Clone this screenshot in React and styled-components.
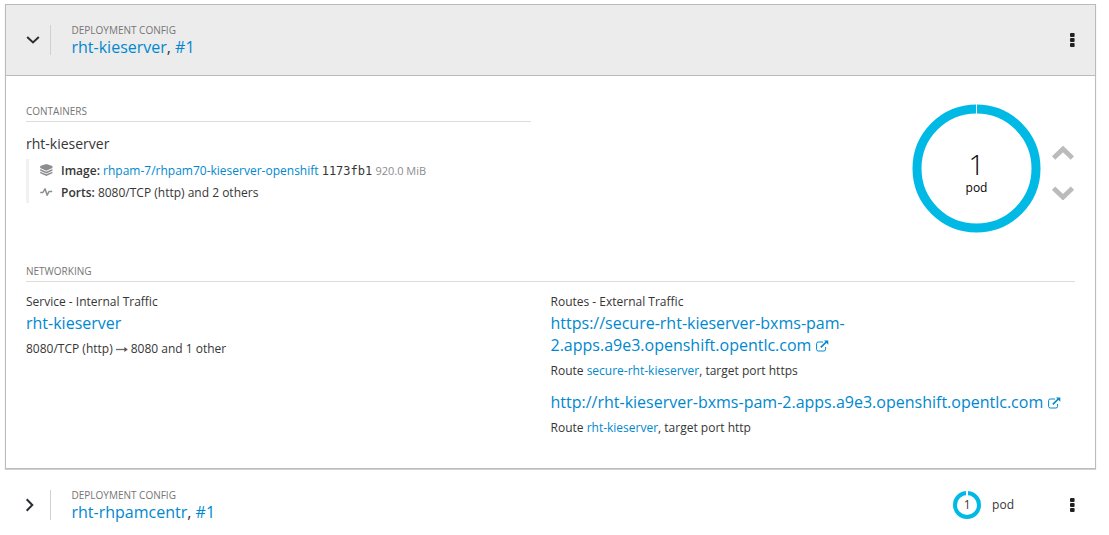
import React from "react";
import styled, { createGlobalStyle } from "styled-components";

const GlobalStyle = createGlobalStyle`
  * { box-sizing: border-box; }
  body {
    margin: 0;
    background: #fff;
    color: #363636;
    font: 12px/20px "Open Sans", "Noto Sans", sans-serif;
  }
`;

const Page = styled.main`
  width: 1091px;
  margin: 4px 0 0 5px;
`;

const Card = styled.section`
  height: 465px;
  margin-bottom: 1px;
  border: 1px solid #bbb;
  box-shadow: 0 1px 1px rgba(0, 0, 0, 0.18);
`;

const Header = styled.header`
  display: flex;
  align-items: center;
  height: ${(p) => (p.$open ? 71 : 70)}px;
  padding-left: ${(p) => (p.$open ? 13 : 14)}px;
  padding-right: ${(p) => (p.$open ? 18 : 19)}px;
  background: ${(p) => (p.$open ? "#ececec" : "#fff")};
  border-bottom: ${(p) => (p.$open ? "1px solid #bbb" : "none")};
`;

const Toggle = styled.div`
  display: flex;
  align-items: center;
  width: 32px;
  height: 30px;
  border-right: 1px solid #d1d1d1;
  padding-left: ${(p) => (p.$open ? 7 : 6)}px;
`;

const Titles = styled.div`
  flex: 1;
  padding-left: 20.5px;
`;

const Eyebrow = styled.div`
  color: #757575;
  font-size: 10px;
  line-height: 14px;
  text-transform: uppercase;
`;

const Title = styled.h2`
  margin: 0;
  font-size: 16px;
  font-weight: 400;
  line-height: 20px;
`;

const Link = styled.a`
  color: #0088ce;
  text-decoration: none;
`;

const Kebab = styled.div`
  display: flex;
  width: 10px;
  justify-content: center;
`;

const Body = styled.div`
  padding: 28px 20px 0;
`;

const TopRow = styled.div`
  display: flex;
  justify-content: space-between;
  height: 160px;
`;

const Containers = styled.div`
  width: 505px;
`;

const SectionTitle = styled.h3`
  margin: 0;
  height: 18px;
  border-bottom: 1px solid #dcdcdc;
  color: #757575;
  font-size: 10px;
  font-weight: 400;
  line-height: 14px;
  text-transform: uppercase;
`;

const ContainerName = styled.div`
  margin-top: 12px;
  font-size: 14px;
  line-height: 20px;
`;

const Details = styled.div`
  margin-top: 5px;
  padding-left: 11px;
  border-left: 3px solid #f1f1f1;
`;

const Detail = styled.div`
  display: flex;
  align-items: center;
  gap: 8px;
  height: 22px;
`;

const DetailText = styled.div`
  padding-top: 2px;
  line-height: 20px;
  white-space: nowrap;
`;

const Label = styled.span`
  font-weight: 600;
`;

const Hash = styled.code`
  font-family: "DejaVu Sans Mono", monospace;
  font-size: 12px;
  line-height: 1;
`;

const Size = styled.span`
  color: #8b8d8f;
  font-size: 11px;
`;

const Scaling = styled.div`
  display: flex;
  align-items: flex-start;
  gap: 11px;
  margin-right: 1px;
`;

const Donut = styled.div`
  display: grid;
  width: ${(p) => p.$size}px;
  height: ${(p) => p.$size}px;
  place-items: center;
  > * { grid-area: 1 / 1; }
`;

const PodCount = styled.div`
  color: #030303;
  text-align: center;
  padding-top: 10px;
`;

const BigNumber = styled.div`
  font-size: 28px;
  font-weight: 300;
  line-height: 29px;
`;

const PodLabel = styled.div`
  font-size: 12px;
  line-height: 18px;
`;

const Arrows = styled.div`
  display: flex;
  flex-direction: column;
  gap: 26px;
  padding-top: 42px;
`;

const Columns = styled.div`
  display: grid;
  grid-template-columns: 504.5px 1fr;
  column-gap: 20px;
  padding-top: 10px;
`;

const Resource = styled.div`
  font-size: 16px;
  line-height: 22px;
  svg { margin-left: 4.6px; vertical-align: -1px; }
`;

const Meta = styled.div`
  margin-top: 5px;
  line-height: 20px;
  svg { margin: 0 3px; vertical-align: 0; }
`;

const NextRoute = styled.div`
  margin-top: 10px;
`;

const Summary = styled.div`
  display: flex;
  align-items: center;
  gap: 11px;
  margin-right: 53px;
`;

const Chevron = ({ open }) => (
  <svg width="14" height="14" viewBox="0 0 14 14" fill="none" stroke="#292e34" strokeWidth="2">
    <path d={open ? "M1.2 4 7 9.4l5.8-5.4" : "M1.7 1.3 7.3 7l-5.6 5.7"} />
  </svg>
);

const KebabIcon = () => (
  <svg width="5" height="14" viewBox="0 0 5 14" fill="#222">
    {[0, 5, 10].map((y) => (
      <rect key={y} x="0" y={y} width="4.6" height="4" rx="1" />
    ))}
  </svg>
);

const LayersIcon = () => (
  <svg width="13" height="12" viewBox="0 0 13 12" fill="#8b8d8f">
    <path d="M6.3 0 12.4 2v2L6.3 6.7.2 4V2Z" />
    <path d="M.2 5l6.1 2.7L12.4 5v1.8L6.3 9.4.2 6.8Z" />
    <path d="M.2 7.7l6.1 2.6 6.1-2.6v1.6L6.3 12 .2 9.3Z" />
  </svg>
);

const PulseIcon = () => (
  <svg width="13" height="12" viewBox="0 0 13 12" fill="none" stroke="#8b8d8f" strokeWidth="1.5" strokeLinejoin="round">
    <path d="M.2 6.5h2.7L5 2.8 7.2 9.2 9 5.5h3.2" />
  </svg>
);

const ExternalIcon = () => (
  <svg width="13" height="12" viewBox="0 0 13 12" fill="none" stroke="#0088ce">
    <path d="M7 2H2.3Q.6 2 .6 3.7v5.6Q.6 11 2.3 11h5.6q1.7 0 1.7-1.7V7" strokeWidth="1" />
    <path d="M4.8 7.4 10.3 2" strokeWidth="1.7" />
    <path d="M8 .5h4.3v4.3Z" fill="#0088ce" stroke="none" />
  </svg>
);

const ArrowIcon = () => (
  <svg width="12" height="7" viewBox="0 0 12 7">
    <path d="M0 3.5h9" stroke="#6b6b6b" strokeWidth="1.3" />
    <path d="M8.4 1 11.8 3.5 8.4 6Z" fill="#555" />
  </svg>
);

const ScaleArrow = ({ down }) => (
  <svg width="22" height="14" viewBox="0 0 22 14" fill="none" stroke="#bbb" strokeWidth="4.8">
    <path d={down ? "M1.6 2.2 11 11.2l9.4-9" : "M1.6 12 11 3l9.4 9"} />
  </svg>
);

const Ring = ({ size, diameter, width, gap }) => (
  <svg width={size} height={size} viewBox={`0 0 ${size} ${size}`}>
    <circle cx={size / 2} cy={size / 2} r={(diameter - width) / 2} fill="none" stroke="#00b9e4" strokeWidth={width} />
    <path d={`M${size / 2} 0v${width + 1}`} stroke="#fff" strokeWidth={gap} />
  </svg>
);

const DeploymentHeader = ({ open, name, children }) => (
  <Header $open={open}>
    <Toggle $open={open}><Chevron open={open} /></Toggle>
    <Titles>
      <Eyebrow>Deployment Config</Eyebrow>
      <Title><Link>{name}</Link>, <Link>#1</Link></Title>
    </Titles>
    {children}
    <Kebab><KebabIcon /></Kebab>
  </Header>
);

export default function App() {
  return (
    <Page>
      <GlobalStyle />
      <Card>
        <DeploymentHeader open name="rht-kieserver" />
        <Body>
          <TopRow>
            <Containers>
              <SectionTitle>Containers</SectionTitle>
              <ContainerName>rht-kieserver</ContainerName>
              <Details>
                <Detail>
                  <LayersIcon />
                  <DetailText>
                    <Label>Image:</Label> <Link>rhpam-7/rhpam70-kieserver-openshift</Link> <Hash>1173fb1</Hash> <Size>920.0 MiB</Size>
                  </DetailText>
                </Detail>
                <Detail>
                  <PulseIcon />
                  <DetailText>
                    <Label>Ports:</Label> 8080/TCP (http) and 2 others
                  </DetailText>
                </Detail>
              </Details>
            </Containers>
            <Scaling>
              <Donut $size={129}>
                <Ring size={129} diameter={128} width={9} gap={1} />
                <PodCount>
                  <BigNumber>1</BigNumber>
                  <PodLabel>pod</PodLabel>
                </PodCount>
              </Donut>
              <Arrows>
                <ScaleArrow />
                <ScaleArrow down />
              </Arrows>
            </Scaling>
          </TopRow>
          <SectionTitle>Networking</SectionTitle>
          <Columns>
            <div>
              <div>Service - Internal Traffic</div>
              <Resource><Link>rht-kieserver</Link></Resource>
              <Meta>8080/TCP (http)<ArrowIcon />8080 and 1 other</Meta>
            </div>
            <div>
              <div>Routes - External Traffic</div>
              <Resource>
                <Link>https://secure-rht-kieserver-bxms-pam-<br />2.apps.a9e3.openshift.opentlc.com<ExternalIcon /></Link>
              </Resource>
              <Meta>Route <Link>secure-rht-kieserver</Link>, target port https</Meta>
              <NextRoute>
                <Resource>
                  <Link>http://rht-kieserver-bxms-pam-2.apps.a9e3.openshift.opentlc.com<ExternalIcon /></Link>
                </Resource>
                <Meta>Route <Link>rht-kieserver</Link>, target port http</Meta>
              </NextRoute>
            </div>
          </Columns>
        </Body>
      </Card>
      <DeploymentHeader name="rht-rhpamcentr">
        <Summary>
          <Donut $size={28}>
            <Ring size={28} diameter={28} width={4} gap={2} />
            <span>1</span>
          </Donut>
          <span>pod</span>
        </Summary>
      </DeploymentHeader>
    </Page>
  );
}
